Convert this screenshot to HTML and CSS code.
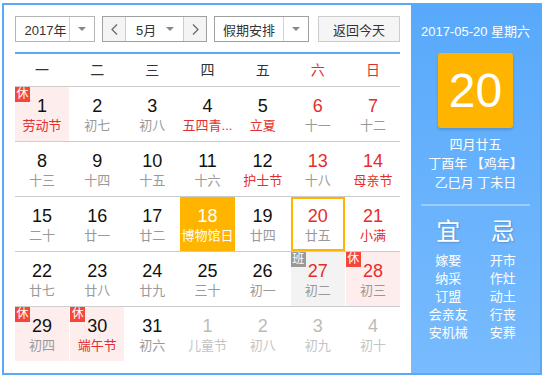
FILE: index.html
```html
<!DOCTYPE html>
<html lang="zh-CN">
<head>
    <meta charset="UTF-8">
    <title>万年历</title>
    <link rel="stylesheet" href="styles.css">
</head>
<body>
    <div class="calendar">
        <div class="main">
            <!-- toolbar -->
            <div class="toolbar">
                <div class="select year">
                    <span class="select-text">2017年</span>
                    <span class="select-arrow"><i class="tri"></i></span>
                </div>
                <div class="select month">
                    <span class="nav-btn">
                        <svg width="7" height="11" viewBox="0 0 7 11"><polyline points="6,0.5 1,5.5 6,10.5" fill="none" stroke="#666" stroke-width="1.2"/></svg>
                    </span>
                    <span class="month-text">5月<i class="tri"></i></span>
                    <span class="nav-btn">
                        <svg width="7" height="11" viewBox="0 0 7 11"><polyline points="1,0.5 6,5.5 1,10.5" fill="none" stroke="#666" stroke-width="1.2"/></svg>
                    </span>
                </div>
                <div class="select holiday">
                    <span class="select-text">假期安排</span>
                    <span class="select-arrow"><i class="tri"></i></span>
                </div>
                <button class="today-btn">返回今天</button>
            </div>

            <!-- weekdays -->
            <div class="week">
                <span>一</span><span>二</span><span>三</span><span>四</span><span>五</span>
                <span class="red">六</span><span class="red">日</span>
            </div>

            <!-- days -->
            <div class="days">
                <div class="row">
                    <div class="day rest"><em class="badge">休</em><b>1</b><small class="red">劳动节</small></div>
                    <div class="day"><b>2</b><small>初七</small></div>
                    <div class="day"><b>3</b><small>初八</small></div>
                    <div class="day"><b>4</b><small class="red">五四青...</small></div>
                    <div class="day"><b>5</b><small class="red">立夏</small></div>
                    <div class="day weekend"><b>6</b><small>十一</small></div>
                    <div class="day weekend"><b>7</b><small>十二</small></div>
                </div>
                <div class="row">
                    <div class="day"><b>8</b><small>十三</small></div>
                    <div class="day"><b>9</b><small>十四</small></div>
                    <div class="day"><b>10</b><small>十五</small></div>
                    <div class="day"><b>11</b><small>十六</small></div>
                    <div class="day"><b>12</b><small class="red">护士节</small></div>
                    <div class="day weekend"><b>13</b><small>十八</small></div>
                    <div class="day weekend"><b>14</b><small class="red">母亲节</small></div>
                </div>
                <div class="row">
                    <div class="day"><b>15</b><small>二十</small></div>
                    <div class="day"><b>16</b><small>廿一</small></div>
                    <div class="day"><b>17</b><small>廿二</small></div>
                    <div class="day active"><b>18</b><small>博物馆日</small></div>
                    <div class="day"><b>19</b><small>廿四</small></div>
                    <div class="day weekend today"><b>20</b><small>廿五</small></div>
                    <div class="day weekend"><b>21</b><small class="red">小满</small></div>
                </div>
                <div class="row">
                    <div class="day"><b>22</b><small>廿七</small></div>
                    <div class="day"><b>23</b><small>廿八</small></div>
                    <div class="day"><b>24</b><small>廿九</small></div>
                    <div class="day"><b>25</b><small>三十</small></div>
                    <div class="day"><b>26</b><small>初一</small></div>
                    <div class="day weekend work"><em class="badge gray">班</em><b>27</b><small>初二</small></div>
                    <div class="day weekend rest"><em class="badge">休</em><b>28</b><small>初三</small></div>
                </div>
                <div class="row">
                    <div class="day rest"><em class="badge">休</em><b>29</b><small>初四</small></div>
                    <div class="day rest"><em class="badge">休</em><b>30</b><small class="red">端午节</small></div>
                    <div class="day"><b>31</b><small>初六</small></div>
                    <div class="day other"><b>1</b><small>儿童节</small></div>
                    <div class="day other"><b>2</b><small>初八</small></div>
                    <div class="day other"><b>3</b><small>初九</small></div>
                    <div class="day other"><b>4</b><small>初十</small></div>
                </div>
            </div>
        </div>

        <!-- right panel -->
        <div class="side">
            <div class="side-date">2017-05-20 星期六</div>
            <div class="big-day">20</div>
            <div class="lunar">
                <p>四月廿五</p>
                <p>丁酉年 【鸡年】</p>
                <p>乙巳月 丁未日</p>
            </div>
            <div class="divider"></div>
            <div class="yiji">
                <div class="col">
                    <h3>宜</h3>
                    <p>嫁娶</p><p>纳采</p><p>订盟</p><p>会亲友</p><p>安机械</p>
                </div>
                <div class="col">
                    <h3>忌</h3>
                    <p>开市</p><p>作灶</p><p>动土</p><p>行丧</p><p>安葬</p>
                </div>
            </div>
        </div>
    </div>
</body>
</html>
```

FILE: styles.css
```css
body {
    margin: 0;
    padding: 0;
    background-color: #fff;
    font-family: "Liberation Sans", "Noto Sans CJK SC", sans-serif;
    color: #333;
}

.calendar {
    display: flex;
    box-sizing: border-box;
    width: 540px;
    height: 372px;
    margin: 3px 0 0 2px;
    border: 2px solid #5aa9f8;
}

.main {
    width: 396px;
    padding: 11px 0 0 11px;
}

/* toolbar */
.toolbar {
    display: flex;
    height: 26px;
    font-size: 13px;
}

.select {
    display: flex;
    box-sizing: border-box;
    height: 26px;
    border: 1px solid #b4b4b4;
    background-color: #fff;
}

.select-text {
    display: flex;
    align-items: center;
    justify-content: center;
}

.select-arrow {
    display: flex;
    align-items: center;
    justify-content: center;
    width: 24px;
    border-left: 1px solid #d2d2d2;
}

.tri {
    display: inline-block;
    width: 0;
    height: 0;
    border-left: 4px solid transparent;
    border-right: 4px solid transparent;
    border-top: 4px solid #888;
}

.year {
    width: 80px;
}

.year .select-text {
    flex: 1;
    padding-left: 6px;
}

.month {
    width: 105px;
    margin-left: 7px;
    border-color: #a0a0a0;
}

.nav-btn {
    display: flex;
    align-items: center;
    justify-content: center;
    width: 22px;
    background-color: #f4f4f4;
}

.month-text {
    display: flex;
    align-items: center;
    justify-content: space-between;
    flex: 1;
    padding: 0 9px 0 10px;
    border-left: 1px solid #ccc;
    border-right: 1px solid #ccc;
}

.holiday {
    width: 95px;
    margin-left: 7px;
    border-color: #a0a0a0;
}

.holiday .select-text {
    flex: 1;
}

.today-btn {
    width: 82px;
    height: 26px;
    margin-left: 9px;
    padding: 0;
    border: 1px solid #ccc;
    background-color: #f5f5f5;
    color: #333;
    font-family: inherit;
    font-size: 13px;
}

/* weekdays */
.week {
    display: grid;
    grid-template-columns: repeat(7, 1fr);
    column-gap: 1px;
    width: 385px;
    height: 32px;
    margin-top: 10px;
    border-top: 2px solid #5aa9f8;
    border-bottom: 1px solid #ccc;
    line-height: 32px;
    text-align: center;
    font-size: 14px;
}

.red {
    color: #e52d2d;
}

/* days */
.days {
    width: 385px;
}

.row {
    display: grid;
    grid-template-columns: repeat(7, 1fr);
    column-gap: 1px;
    height: 54px;
    border-bottom: 1px solid #ccc;
}

.row:last-child {
    border-bottom: none;
}

.day {
    position: relative;
    display: flex;
    flex-direction: column;
    align-items: center;
    box-sizing: border-box;
    padding-top: 10px;
}

.day b {
    font-weight: normal;
    font-size: 18px;
    line-height: 19px;
    color: #111;
}

.day small {
    font-size: 13px;
    line-height: 20px;
    color: #999;
    white-space: nowrap;
}

.day small.red {
    color: #e52d2d;
}

.day.weekend b {
    color: #e52d2d;
}

.day.rest {
    background-color: #fdeeed;
}

.day.work {
    background-color: #f3f3f3;
}

.day.active {
    background-color: #ffb400;
}

.day.active b,
.day.active small {
    color: #fff;
}

.day.today {
    box-shadow: inset 0 0 0 2px #ffb400;
}

.day.other b {
    color: #bbb;
}

.day.other small {
    color: #c4c4c4;
}

.badge {
    position: absolute;
    top: 0;
    left: 0;
    width: 15px;
    height: 15px;
    background-color: #f5463a;
    color: #fff;
    font-style: normal;
    font-size: 12px;
    line-height: 15px;
    text-align: center;
}

.badge.gray {
    background-color: #999;
}

/* right panel */
.side {
    flex: 1;
    padding: 17px 10px 0;
    background: linear-gradient(#58a9fb, #78bbfe);
    color: #fff;
    text-align: center;
}

.side-date {
    margin: 0 -10px;
    font-size: 13px;
    line-height: 20px;
    white-space: nowrap;
}

.big-day {
    width: 75px;
    height: 75px;
    margin: 11px auto 0;
    border-radius: 3px;
    background-color: #ffb400;
    box-shadow: 0 2px 3px rgba(0, 0, 0, 0.15);
    font-size: 48px;
    line-height: 75px;
}

.lunar {
    margin-top: 7px;
    font-size: 13px;
    line-height: 19px;
}

.lunar p,
.yiji p {
    margin: 0;
}

.divider {
    height: 2px;
    margin-top: 12px;
    background-color: rgba(255, 255, 255, 0.35);
}

.yiji {
    display: flex;
    margin-top: 11px;
}

.yiji .col {
    flex: 1;
    font-size: 13px;
    line-height: 18px;
}

.yiji h3 {
    margin: 0 0 5px;
    font-size: 24px;
    font-weight: normal;
    line-height: 30px;
    text-shadow: 1px 1px 2px rgba(0, 0, 0, 0.2);
}
```
